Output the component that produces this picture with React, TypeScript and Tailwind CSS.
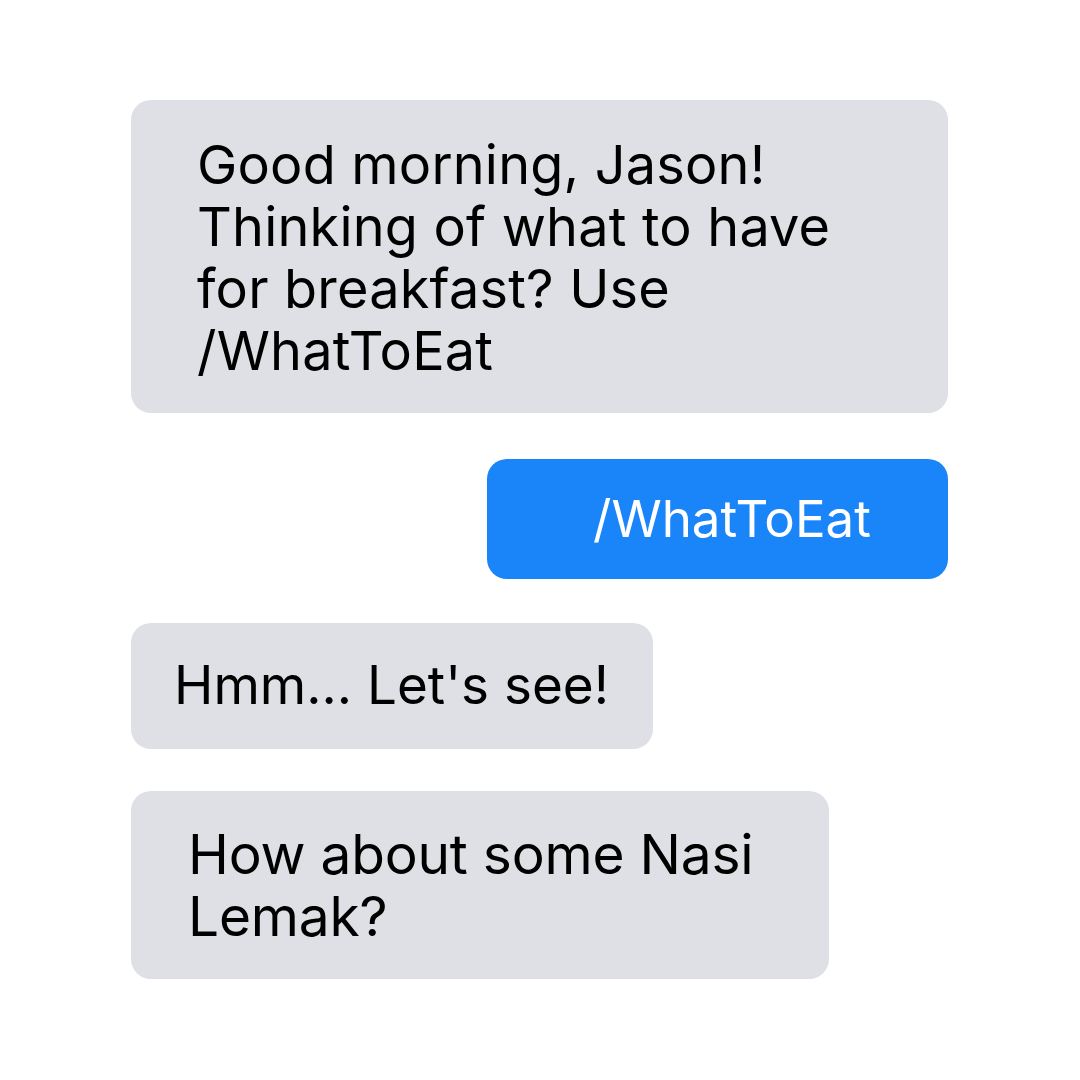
export default function App() {
  const font = { fontFamily: "Inter, 'Noto Sans', sans-serif" }

  return (
    <div className="h-[1080px] w-[1080px] bg-white text-black" style={font}>
      <div className="flex w-[948px] flex-col pl-[131px] pt-[100px]">
        {/* bot greeting */}
        <div className="w-[817px] rounded-[20px] bg-[#dfe0e5] pb-[31px] pl-[66px] pt-[34px] text-[54px] leading-[62px] tracking-[0.2px]">
          Good morning, Jason!
          <br />
          Thinking of what to have
          <br />
          for breakfast? Use
          <br />
          /WhatToEat
        </div>

        {/* user command */}
        <div className="mt-[46px] flex h-[120px] w-[461px] items-center self-end rounded-[20px] bg-[#1a85f8] pl-[106px] text-[51px] text-white">
          /WhatToEat
        </div>

        <div className="mt-[44px] flex h-[126px] w-[522px] items-center rounded-[20px] bg-[#dfe0e5] pl-[43px] text-[53px]">
          Hmm... Let's see!
        </div>

        <div className="mt-[42px] w-[698px] rounded-[20px] bg-[#dfe0e5] pb-[32px] pl-[57px] pt-[32px] text-[55px] leading-[62px] tracking-[-0.2px]">
          How about some Nasi
          <br />
          Lemak?
        </div>
      </div>
    </div>
  )
}
